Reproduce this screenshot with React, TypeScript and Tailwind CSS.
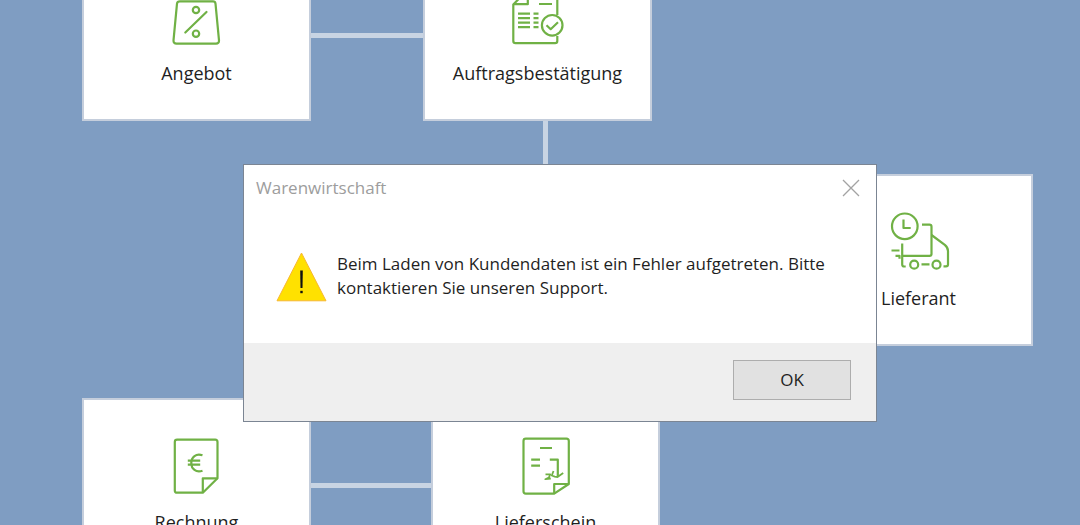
import React, { useState } from "react";

function IconFrame({ children }: { children: React.ReactNode }) {
  return (
    <svg
      viewBox="0 0 64 58"
      className="h-[58px] w-16 shrink-0 overflow-visible"
      fill="none"
      stroke="#70b145"
      strokeWidth="2.200"
      strokeLinejoin="round"
      aria-hidden="true"
    >
      {children}
    </svg>
  );
}

function OfferIcon() {
  return (
    <IconFrame>
      <path d="M15 14.300h33q2.200 0 2.500 2.300L54 53.300q.2 3.300-3 3.300H11.500q-3.200 0-3-3.300L12 16.600Q12.300 14.300 15 14.300Z" />
      <circle cx="31" cy="23" r="3.200" />
      <circle cx="31" cy="46.700" r="3.200" />
      <path d="M20.300 45.500 41.500 25" strokeLinecap="round" />
    </IconFrame>
  );
}

function ConfirmationIcon() {
  return (
    <IconFrame>
      <path d="M51.300 28V7H17.500L7.300 17.500V54q0 2.200 2.200 2.200h39.600q2.200 0 2.200-2.200v-5" />
      <path d="M8 17.200h13.800V7" />
      <path d="M33 17h13M12 26.700h12M12 31.200h12M12 35.600h12M12 40.200h12M27.500 26.700h5M27.500 31.200h5M27.500 35.600h5M27.500 40.200h5" />
      <circle cx="46.200" cy="38.300" r="10.300" />
      <path d="m40.500 38.300 4.200 3.900 7.300-6.900" />
    </IconFrame>
  );
}

function SupplierIcon() {
  return (
    <IconFrame>
      <circle cx="17.800" cy="14.300" r="12.800" />
      <path d="M16.500 7.500V16h7.200" />
      <path d="M35 12.700h7.500q2 0 2 2V42q0 1.800-2 1.800H16" />
      <path d="m44.500 23 13.300 9.800q3.200 2.700 3.200 6.200v13.500q0 1.800-2 1.800h-2.500" />
      <path d="M15.200 31.500V52.500q0 2 2 2h1.500" />
      <circle cx="27.200" cy="52.700" r="4" />
      <circle cx="49.500" cy="52.700" r="4" />
      <path d="M34.500 52.300h8M4.500 38.500h8M8.500 43.800h4v3" />
    </IconFrame>
  );
}

function InvoiceIcon() {
  return (
    <IconFrame>
      <path d="M52.500 42.300V6q0-2.300-2.300-2.300H12.100q-2.300 0-2.300 2.300v48.400q0 2.300 2.300 2.300h25.700Z" />
      <path d="M52.500 42.300H37.800v14.400" />
      <path d="M37.500 19.200C31 17 26.300 21 26.300 27s4.700 10 11.200 7.800M22.800 24.700h12.400M22.800 28.700h12.400" />
    </IconFrame>
  );
}

function DeliveryNoteIcon() {
  return (
    <IconFrame>
      <path d="M54.800 48V5q0-2.300-2.300-2.300H11.800Q9.500 2.700 9.500 5v50.300q0 2.300 2.300 2.300h28.400Z" />
      <path d="M54.800 48H40.200v9.700" />
      <path d="M26 12h12M17.200 23.700H26M17.200 29.700H26M35.800 23.700h8V40" />
      <path d="M31.500 38.300h4.700l-1.300 3.200-3.600 1.700 5.500-.7" strokeWidth="1.800" />
      <path d="m39.500 35-1.700 4.500 2.900 1.200 2.800.3 5.700-4" strokeWidth="1.800" />
    </IconFrame>
  );
}

function Node({
  label,
  place,
  children,
}: {
  label: string;
  place: string;
  children: React.ReactNode;
}) {
  return (
    <a
      href="#"
      className={`absolute flex w-[229px] flex-col items-center gap-4 border-2 border-[#c5cedc] bg-white pt-9 pb-[34px] ${place}`}
    >
      {children}
      <span className="text-lg leading-6">{label}</span>
    </a>
  );
}

export default function App() {
  const [open, setOpen] = useState(true);
  return (
    <main className="relative h-screen overflow-hidden bg-[#7f9dc2] font-['Open_Sans','Noto_Sans',sans-serif] text-[#1f1f1f]">
      <div className="absolute top-[33px] left-[311px] h-[5px] w-[114px] bg-[#c8d4e3]" />
      <div className="absolute top-[120px] left-[543px] h-[48px] w-[5px] bg-[#c8d4e3]" />
      <div className="absolute top-[483px] left-[311px] h-[5px] w-[122px] bg-[#c8d4e3]" />

      <Node label="Angebot" place="top-[-51px] left-[82px]">
        <OfferIcon />
      </Node>
      <Node label="Auftragsbestätigung" place="top-[-51px] left-[423px]">
        <ConfirmationIcon />
      </Node>
      <Node label="Lieferant" place="top-[174px] left-[804px]">
        <SupplierIcon />
      </Node>
      <Node label="Rechnung" place="top-[398px] left-[82px]">
        <InvoiceIcon />
      </Node>
      <Node label="Lieferschein" place="top-[398px] left-[431px]">
        <DeliveryNoteIcon />
      </Node>

      {open && (
        <section
          role="alertdialog"
          aria-labelledby="dialog-title"
          aria-describedby="dialog-text"
          className="absolute top-[164px] left-[243px] w-[634px] border border-[#7b8593] bg-white"
        >
          <header className="flex h-[46px] items-center justify-between pr-4 pl-3">
            <h1 id="dialog-title" className="text-[17px] leading-6 text-[#9d9d9d]">
              Warenwirtschaft
            </h1>
            <button
              type="button"
              aria-label="Schließen"
              onClick={() => setOpen(false)}
              className="flex size-[18px] items-center justify-center"
            >
              <svg viewBox="0 0 18 18" className="size-[18px]" stroke="#a3a3a3" strokeWidth="1.300">
                <path d="m1 1 16 16M17 1 1 17" />
              </svg>
            </button>
          </header>
          <div className="flex gap-2.5 px-8 py-[41px]">
            <svg viewBox="0 0 51 50" className="h-[50px] w-[51px] shrink-0" aria-hidden="true">
              <path d="M25.500 1 50 48.800H1Z" fill="#ffe100" stroke="#f7b733" strokeWidth="1" />
              <path d="M24.200 18.500h2.600l-.3 17.500h-2Z" fill="#111" />
              <rect x="24.300" y="38.800" width="2.400" height="2.400" fill="#111" />
            </svg>
            <p id="dialog-text" className="text-[17px] leading-6">
              Beim Laden von Kundendaten ist ein Fehler aufgetreten. Bitte kontaktieren Sie unseren Support.
            </p>
          </div>
          <footer className="flex justify-end bg-[#efefef] px-[25px] pt-[17px] pb-[21px]">
            <button
              type="button"
              onClick={() => setOpen(false)}
              className="h-10 w-[118px] border border-[#adadad] bg-[#e1e1e1] text-[17px] leading-6"
            >
              OK
            </button>
          </footer>
        </section>
      )}
    </main>
  );
}
